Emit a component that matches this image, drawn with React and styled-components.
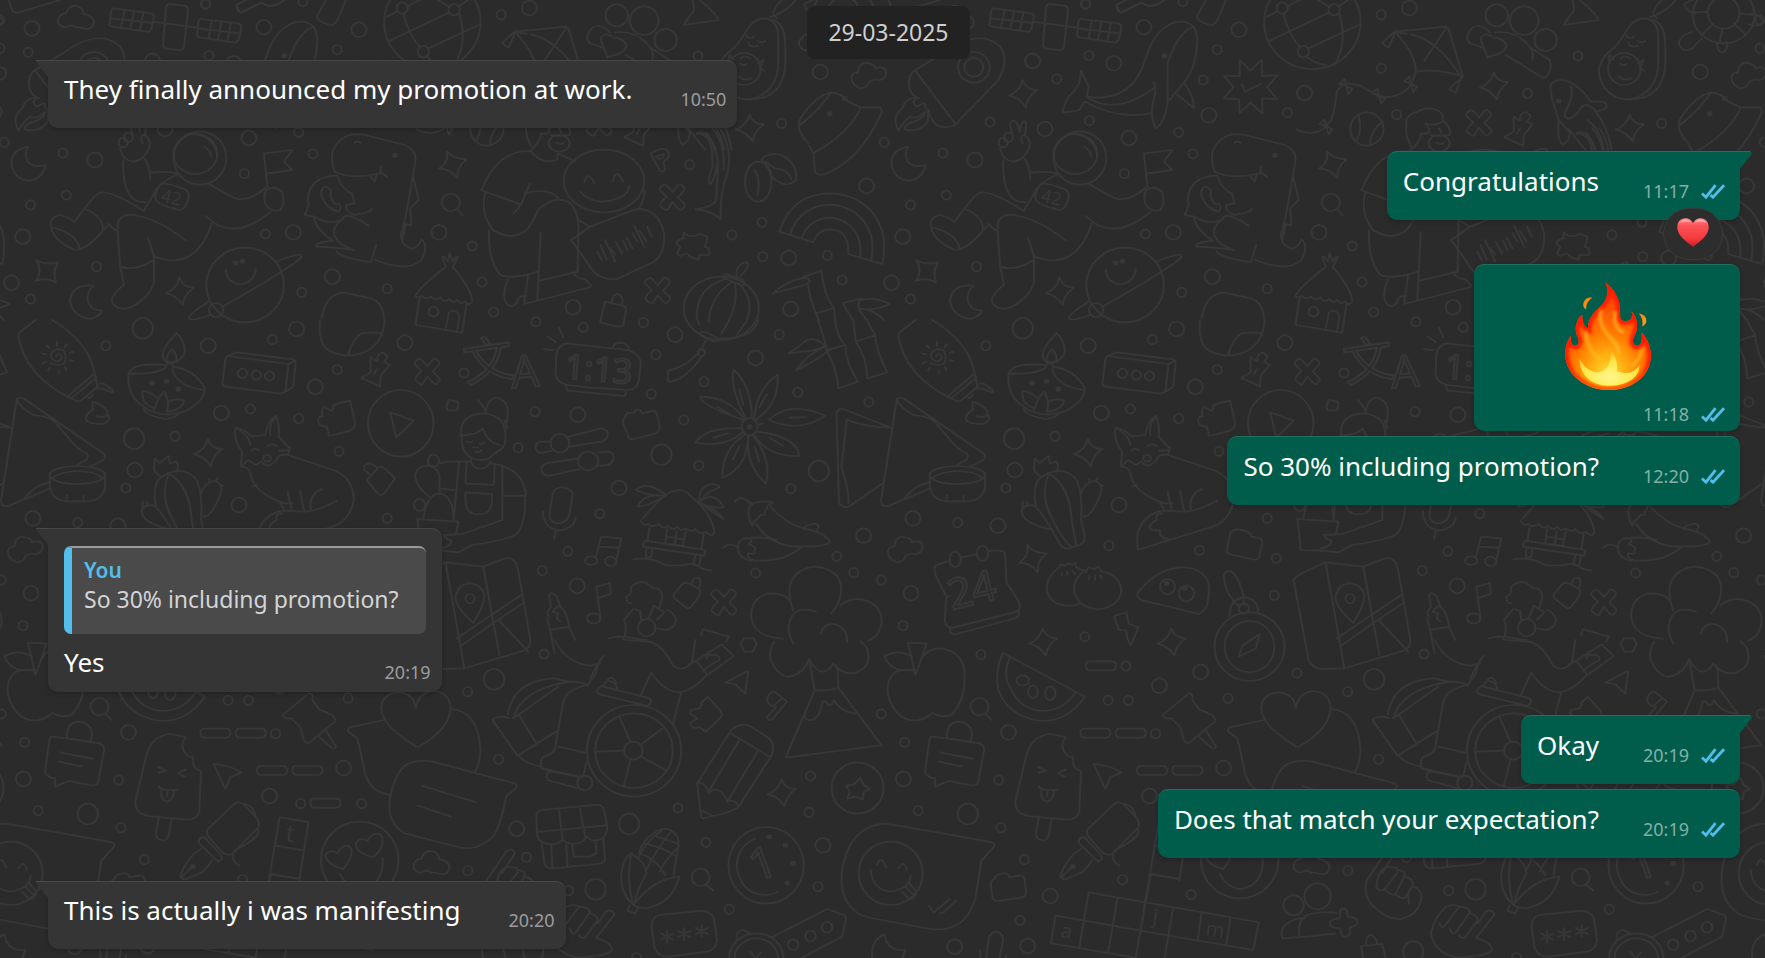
import React from 'react';
import styled, { createGlobalStyle, css } from 'styled-components';

const GlobalStyle = createGlobalStyle`
  * {
    box-sizing: border-box;
  }
  body {
    margin: 0;
    background: #2b2b2b;
    font-family: 'Noto Sans', 'Open Sans', sans-serif;
  }
`;

// ---------------------------------------------------------------- wallpaper

const LINE = '#373737';
const TILE_WIDTH = 880;
const TILE_HEIGHT = 960;

// the doodles are drawn on enlarged sheets, this brings them back to size
const SHEET_SCALE = 'scale(0.3763 0.3333)';

const MARKS = {
  sparkle: 'M0,-40 Q8,-10 38,-10 Q12,10 8,42 Q-8,12 -37,6 Q-8,-6 0,-40Z',
  sparkleTilted: 'M-15,-40 Q0,-18 36,-15 Q12,5 12,40 Q-5,12 -37,12 Q-10,-5 -15,-40Z',
  sparkleSquare: 'M-27,-33 Q0,-20 29,-27 Q15,0 24,33 Q0,15 -29,28 Q-10,0 -27,-33Z',
  cross:
    'M0,-14 L16,-36 Q22,-40 32,-26 Q34,-20 14,2 L32,22 Q36,30 22,40 Q18,42 0,16 L-14,40 Q-20,42 -32,28 Q-36,22 -16,0 L-34,-20 Q-36,-28 -22,-36 Q-16,-38 0,-14Z',
  pin: 'M-15,-35 L2,-23 L3,-35 Q8,-50 20,-48 Q32,-40 27,-30 L20,-20 L35,-13 L12,20 L10,52 L-40,27 L-15,10Z M2,0 L-7,17',
  cloud:
    'M-22,40 Q-45,30 -46,7 Q-40,-10 -28,-7 Q-28,-35 -5,-37 Q18,-33 18,-20 Q45,-30 47,-8 Q45,15 25,15 Q15,10 0,22 Q0,37 -22,40Z',
  puff: 'M-25,30 Q-50,28 -45,3 Q-40,-10 -25,-12 Q-15,-40 5,-34 Q22,-27 22,-10 Q45,-7 50,13 Q45,38 28,35 Q10,28 0,30 Q-10,18 -25,30Z',
  pill: 'M12,0 h56 q12,0 12,13 t-12,14 h-56 q-12,0 -12,-14 t12,-13z',
  bow: 'M0,0 l-18,-6 l14,-14 z l16,10 l-10,16 z',
  star: 'M0,-18 V18 M-16,-9 L16,9 M-16,9 L16,-9',
};

const SHEETS = [
  {
    x: 0,
    y: 0,
    marks: [['puff', 200, 52]],
    small: [[0, 60], [75, 157], [0, 145], [805, 5], [546, 12]],
    medium: [[85, 85]],
    ovals: [[1198, 607, 24, 26], [1605, 543, 107, 94], [1152, 935, 13, 15], [574, 930, 19, 21]],
    dots: [[1050, 466]],
    paths: [
      'M22,0 L35,35 Q40,40 50,37 L160,0 M640,38 Q625,25 632,12 Q650,5 660,-5 M640,38 L695,8 Q720,30 755,0',
      // t-rex on the phone
      'M890,515 Q870,460 900,425 Q925,395 970,405 L1075,435 Q1110,450 1103,490 L1095,540 Q1080,650 1065,710 M890,515 Q940,540 1010,520 L1013,500 M1010,515 L1028,530 M985,530 L995,545 L1000,525 M942,428 Q950,420 958,428',
      'M895,527 Q820,530 818,600 L820,615 L810,645 L835,650 Q880,680 912,655 M868,560 Q850,560 855,590 Q870,630 900,635 Q910,625 900,610 Q885,620 878,585 Q885,570 868,560 M897,527 L905,552 L925,575 L935,580 L942,610 L920,615 Q915,630 940,645 Q980,640 988,627',
      'M912,655 Q880,680 890,710 Q900,735 940,750 Q870,740 840,740 Q835,728 885,722 Q840,690 835,655 M895,755 Q900,770 985,787 L1000,735 M993,778 Q1080,820 1120,780 Q1140,740 1120,718 Q1110,745 1095,745 Q1065,740 1065,700 M912,650 Q930,640 980,677 M1098,530 L1113,600 L1090,625 L1093,675 L1078,672 L1070,718',
      'M1214,627 L1230,646',
      // sitting man
      'M1280,570 Q1320,450 1410,453 M1277,570 L1385,614 L1408,550 M1290,580 Q1275,640 1310,690 Q1360,725 1400,690 Q1420,660 1430,630 Q1470,585 1510,605 Q1540,630 1537,700 L1535,815 L1435,842 M1395,580 Q1460,560 1485,597 M1385,614 L1365,640 M1300,690 Q1295,780 1330,825 Q1360,840 1430,815 M1437,697 L1428,900 M1403,830 L1393,912 L1568,862 M1350,838 Q1330,890 1350,915 Q1370,925 1378,895 Q1385,885 1395,890 M1537,660 L1568,680 M1410,453 Q1440,495 1480,480 L1482,460 L1530,485',
      'M1525,820 Q1530,835 1555,838 L1572,858',
      'M855,955 Q865,880 915,878 L985,895 Q1020,910 1020,955',
      // hut
      'M1105,890 Q1105,870 1185,800 L1175,770 Q1180,765 1190,785 L1195,758 L1203,785 Q1215,765 1218,770 L1203,800 Q1255,870 1255,905 Q1245,920 1235,905 Q1225,915 1215,900 Q1205,912 1195,898 Q1180,910 1170,893 Q1155,905 1145,890 Q1130,902 1122,888 Q1110,895 1105,890 M1115,895 L1104,975 L1228,998 L1240,912 M1190,955 Q1190,930 1208,932 Q1222,940 1220,955 L1215,990 M1190,955 L1185,985',
    ],
  },
  {
    x: 590,
    y: 0,
    marks: [
      ['sparkle', 424, 383], ['sparkle', 1150, 280], ['sparkle', 1248, 873],
      ['sparkleSquare', 895, 815], ['cross', 219, 590], ['cross', 180, 870], ['cloud', 740, 225],
    ],
    small: [
      [1317, 12], [1326, 167], [1240, 237], [1063, 366], [782, 427], [938, 459], [947, 585],
      [852, 615], [509, 370], [457, 667], [377, 705], [459, 770], [631, 766], [670, 840],
      [852, 897], [1027, 800], [1476, 702], [1420, 521], [1327, 362], [265, 494],
    ],
    medium: [
      [1472, 82], [1176, 183], [1392, 190], [612, 216], [1209, 387], [1432, 414], [1023, 480],
      [735, 558], [831, 710], [1550, 697], [528, 774], [801, 848], [533, 927],
    ],
    ovals: [
      [447, 545, 35, 60], [1020, 202, 42, 46], [1020, 202, 25, 28], [1112, 412, 12, 14],
      [1098, 428, 12, 14], [1302, 474, 70, 80], [1290, 462, 58, 60], [1422, 855, 103, 112],
      [349, 925, 100, 95],
    ],
    dots: [[1526, 167], [637, 341], [677, 296], [1397, 789], [1415, 784]],
    paths: [
      // whale
      'M1320,290 Q1440,310 1475,180 Q1505,70 1570,64 Q1612,66 1614,120 Q1612,200 1580,245 L1540,300 M1602,80 Q1560,100 1535,190 L1535,310 Q1525,370 1505,385 Q1485,350 1500,290 Q1505,260 1498,245 M1580,250 Q1605,290 1605,325 Q1590,310 1560,283 M1320,290 L1325,260 L1305,212 L1300,250 L1285,275 Q1265,295 1260,320 L1255,337 Q1290,335 1300,330 L1315,305 Q1400,360 1490,340 M1325,295 Q1400,345 1498,265',
      'M285,400 Q330,400 325,500 Q310,550 320,552 Q330,545 340,480 M345,385 Q380,450 365,520 Q345,580 347,657 Q320,630 280,628 Q330,620 335,600 L340,500 Q340,440 310,400 M325,385 Q360,430 355,510',
      // hat
      'M640,277 Q670,280 680,300 Q710,320 720,322 L770,322 Q780,330 770,350 Q720,470 640,515 Q600,535 597,510 L594,460 Q580,430 560,400 Q548,370 565,345 Q600,290 640,277 M720,322 Q690,400 594,460 M640,280 Q600,340 558,375',
      'M437,508 Q455,540 445,587 M455,480 Q470,455 510,465 Q555,495 547,540 Q520,570 483,530 Q480,500 455,480 M468,485 Q490,510 510,508 Q530,520 535,537',
      // rainbow
      'M503,695 C530,600 590,580 640,580 C730,585 800,660 777,792 L686,762 C690,700 660,688 635,688 Q605,690 593,727 Z M532,703 C550,635 600,614 640,614 C715,620 765,690 747,780 M563,714 C575,670 610,653 640,653 C690,660 725,700 718,772',
      'M250,697 Q255,710 280,708 L290,702 L312,710 L306,740 Q320,745 317,765 L290,765 L288,780 L265,770 Q260,755 240,768 L232,760 L240,740 Q228,735 232,722 L248,715Z',
      'M162,460 Q190,440 205,450 Q218,470 195,485 L200,510 Q190,520 185,510 L162,465 M175,470 L195,462 Q200,470 185,478Z',
      // rocket
      'M875,295 Q845,285 848,240 Q850,220 865,210 L980,130 Q1050,95 1090,140 Q1115,180 1085,240 L972,373 Q950,390 920,375 Q900,350 900,330 M865,213 L972,373',
      'M820,392 Q800,350 830,325 Q835,295 870,293 Q850,310 870,320 Q895,300 890,320 Q905,340 895,370 Q870,400 835,388 Q840,370 860,365 Q890,355 890,335 Q870,360 850,350 Q830,370 820,392',
      // satellite
      'M1072,25 L1172,40 Q1180,42 1180,50 L1172,90 Q1170,97 1160,95 L1070,80 Q1060,78 1062,70 L1066,35 Q1068,25 1072,25 M1102,28 L1092,84 M1127,32 L1117,88 M1152,36 L1142,92 M1063,55 L1175,68 M1222,12 L1260,17 Q1270,20 1270,30 L1260,140 Q1258,150 1248,150 L1212,146 Q1203,142 1204,132 L1212,22 Q1214,12 1222,12Z M1180,66 L1295,83 M1304,57 L1405,70 Q1413,74 1412,82 L1405,120 Q1400,128 1392,127 L1300,112 Q1293,108 1295,100 L1298,65 Q1300,57 1304,57 M1334,60 L1325,116 M1359,64 L1350,120 M1384,68 L1375,124 M1296,85 L1410,100',
      'M1410,38 Q1395,25 1402,12 Q1420,5 1430,-5 M1410,38 L1465,8 Q1490,30 1525,0',
      // astronaut
      'M1090,445 Q1095,480 1125,485 Q1155,480 1168,440 Q1170,415 1155,405 Q1160,380 1158,365 Q1145,360 1142,395 Q1138,370 1128,362 Q1110,360 1122,400 M1155,405 Q1140,405 1150,430 M1098,480 Q1095,590 1140,605 L1157,607 M1155,475 Q1170,500 1170,540 M1270,402 Q1340,400 1348,470 M1313,440 Q1330,450 1332,472',
      'M1170,518 Q1210,512 1240,520 M1245,522 Q1190,550 1180,580 L1153,633 Q1050,560 1030,582 Q1015,595 968,667 Q955,650 930,645 Q905,650 905,675 Q910,720 965,748 Q1000,755 1045,690 L1060,672 Q1070,690 1083,690 M1200,552 Q1215,548 1262,568 Q1275,575 1272,595 Q1265,625 1250,630 Q1200,620 1185,600 Q1180,590 1190,565 Q1195,552 1200,552',
      'M998,627 Q1045,650 1045,690 M908,682 Q975,700 983,748 M1083,690 Q1080,640 1125,645 Q1190,655 1265,722 M1083,690 L1090,800 L1100,855 Q1060,890 1070,910 Q1090,940 1130,915 Q1180,880 1180,835 L1180,770 Q1170,730 1163,712 M1090,800 Q1130,815 1178,780 M1178,768 Q1290,820 1335,665 M1317,648 Q1390,730 1490,635 M1327,552 Q1380,590 1405,598 Q1440,600 1480,560 M1478,570 Q1500,555 1520,575 Q1530,610 1515,630 Q1490,640 1475,610 Q1470,590 1478,570 M1482,565 L1472,460 L1548,450 L1525,485 L1548,510 L1482,520',
      // planet
      'M1371,810 Q1375,850 1410,853 Q1450,845 1450,805 M1505,785 Q1570,755 1573,768 Q1565,790 1362,920 M1325,905 Q1270,945 1273,955 Q1280,965 1330,945',
      'M846,440 Q798,450 801,495 Q810,540 850,542 Q885,535 892,495 Q860,505 845,485 Q833,465 846,440 M1020,857 Q960,850 957,905 Q965,950 1010,957 Q1035,950 1042,932 Q1005,930 1003,895 Q1005,870 1020,857',
      // voice note
      'M0,680 L120,628 Q180,620 197,700 Q200,760 170,785 L70,838 Q20,840 0,800 L-50,720 Z M20,755 L32,782 M28,735 L45,780 M40,720 L67,785 M55,745 L67,765 M68,725 L85,760 M88,722 L100,750 M98,712 L113,745 M113,700 L125,725 M118,678 L145,742 M132,692 L150,725 M152,680 L164,710 M60,545 Q70,500 88,545 M-15,545 Q-5,510 12,550 M104,558 Q100,600 30,605 Q-10,600 -25,575 M145,570 Q145,600 130,627',
      // pumpkin
      'M360,838 Q285,860 283,950 L290,975 M375,848 Q320,890 315,965 M385,850 Q395,900 370,960 L350,1000 M395,850 Q440,900 415,965 L390,1005 M352,832 L360,822 L405,838 Q415,850 405,858 Q380,845 352,832 M390,828 Q385,795 415,787 Q430,795 400,828',
      'M40,905 L90,918 Q97,922 95,935 L88,978 Q80,980 75,980 L27,968 Z M58,905 Q60,882 75,882 Q90,890 85,912',
      'M485,880 Q540,830 580,835 Q590,850 570,855 L485,880 M565,832 L615,812 Q620,880 648,925 L600,940 Q580,880 580,855 M600,940 L610,965 M648,925 L652,960 M672,910 L722,895 Q710,905 715,930 L735,960 M672,910 L698,960 M722,900 Q760,890 797,912 Q750,935 715,925 M715,925 Q760,930 780,960',
    ],
  },
  {
    x: 1175,
    y: 0,
    marks: [
      ['sparkle', 847, 257], ['sparkleTilted', 419, 494], ['cross', 808, 367], ['pin', 915, 385],
      ['bow', 455, 257], ['bow', 542, 285], ['bow', 627, 250], ['bow', 402, 378],
    ],
    small: [
      [112, 149], [75, 240], [10, 397], [299, 338], [548, 44], [548, 205], [589, 344],
      [937, 280], [1071, 168], [48, 462], [18, 877], [245, 866], [471, 738], [497, 846], [528, 936],
    ],
    medium: [[170, 89], [344, 279], [90, 346], [623, 24], [383, 697], [99, 830], [739, 922]],
    ovals: [
      [365, 67, 128, 140], [285, 24, 15, 17], [423, 29, 15, 17], [341, 155, 15, 17],
      [855, 46, 30, 33], [928, 62, 38, 43], [985, 120, 30, 33], [1194, 207, 43, 48],
      [1458, 45, 82, 85], [1458, 38, 42, 48], [510, 387, 44, 50], [702, 430, 28, 25],
    ],
    dots: [[1019, 303]],
    paths: [
      'M85,-5 L60,45 Q55,55 65,62 L90,75 Q105,80 115,55 L137,-5',
      'M244,50 L272,34 M300,18 L340,-5 M437,18 L465,-5 M252,122 L408,38 M437,42 Q460,120 425,195 M355,145 L488,75 M288,40 Q300,100 332,142 M350,170 Q370,190 400,195 M380,0 L408,20',
      // kite
      'M583,95 L720,80 Q726,82 728,90 L765,230 Q700,205 640,215 Q640,160 583,95 Z M720,85 L662,183 M628,103 Q700,120 762,235 M583,95 L550,130 L568,143 L585,98 L615,101 M760,235 L728,267 L746,279 L758,240 M640,215 Q635,240 620,265 Q590,295 545,292 Q520,275 500,262 Q450,235 430,275 Q425,330 415,360 Q400,385 380,395 Q350,405 322,388',
      'M838,97 Q800,60 782,95 Q770,120 785,130 L820,145 M830,172 L812,118 Q820,92 846,112 Q880,115 880,142 Q875,160 830,172 M850,97 Q900,90 935,130 Q955,150 950,180 M880,165 L975,232 Q985,237 990,225 Q1005,200 995,180 Q970,160 940,140',
      'M1057,0 L1060,30 L1033,75 L1125,60 Q1120,40 1070,-5',
      // avocado
      'M1160,150 C1195,120 1200,60 1245,55 C1300,60 1280,130 1285,180 C1285,250 1255,290 1205,298 C1150,300 1120,240 1128,200 Q1135,170 1160,150 M1270,60 C1310,75 1302,130 1303,190 C1300,260 1270,300 1205,298 M1198,105 Q1205,118 1218,112 M1230,122 Q1238,132 1250,123 M1205,128 Q1210,145 1230,138 M1185,175 Q1195,165 1210,175 M1182,190 Q1190,200 1200,192 M1180,230 Q1195,245 1212,235 M1152,182 L1155,165 L1165,178 M1230,190 L1245,180 L1235,205 L1248,212 M1262,52 L1275,45 L1280,55 M1278,45 Q1310,30 1330,0 M1270,40 Q1280,10 1300,-5',
      // turtle
      'M1375,95 Q1335,110 1340,135 Q1350,160 1375,145 L1400,115 M1440,130 Q1445,165 1460,155 Q1472,140 1465,125 M1530,40 Q1560,45 1562,65 Q1550,85 1525,72 M1382,40 Q1350,30 1355,10 L1375,0 M1377,38 L1415,35 M1400,105 L1430,72 M1447,128 L1455,85 M1515,102 L1485,70 M1540,45 L1500,40',
      'M200,212 L230,180 L232,228 L272,225 L245,262 L272,298 L232,295 L232,340 L200,308 L172,340 L170,298 L130,295 L155,262 L130,228 L172,228 L172,180 Z M178,252 L185,275 L228,252',
      'M487,345 Q500,390 480,425 M552,365 Q520,390 518,435',
      'M628,440 Q610,400 615,375 Q610,345 645,335 Q665,320 690,328 Q715,335 712,360 Q735,385 730,405 Q700,410 680,405 M712,365 Q690,380 665,370 Q690,405 655,400 Q655,420 626,452 M695,428 Q710,435 715,428 M702,385 L708,398',
      // orca
      'M1020,360 Q995,280 998,255 Q1010,235 1040,242 Q1080,260 1105,305 Q1150,300 1147,320 Q1140,330 1118,335 Q1150,380 1160,450 M1052,260 Q1060,290 1040,330 Q1030,350 1045,357 Q1065,350 1075,330 Q1085,305 1105,320 Q1115,325 1118,335 M1020,360 Q1015,420 1030,433 Q1045,430 1050,400 L1020,360 M1095,360 Q1130,385 1140,450 M1045,385 L1090,450 M1067,400 Q1100,385 1115,450',
    ],
  },
  {
    x: 0,
    y: 320,
    marks: [['pin', 1000, 147], ['cross', 1136, 153]],
    small: [
      [896, 149], [794, 296], [901, 394], [1233, 159], [1422, 275], [1377, 383], [1424, 5],
      [1029, 595], [1509, 694], [1550, 22],
    ],
    medium: [[1076, 68], [838, 200], [788, 27], [1536, 284]],
    ovals: [
      [710, 415, 10, 10], [1065, 310, 87, 100], [1152, 422, 15, 18], [1115, 555, 15, 18],
      [1488, 370, 25, 28], [1563, 423, 27, 28],
    ],
    paths: [
      'M850,0 Q845,80 880,95 Q930,120 980,90 Q1020,60 1022,0 M925,105 Q935,60 960,40 Q1000,35 1013,40',
      // fox
      'M625,325 Q640,320 670,350 Q690,345 705,345 Q712,300 733,287 Q745,320 740,350 L770,385 L765,405 Q740,400 735,420 Q710,450 695,425 L680,435 L660,420 L640,440 L643,395 Q620,360 625,325 M765,405 L880,448 Q940,470 940,540 Q930,610 870,625 L685,690 Q680,640 690,625 M640,440 Q665,440 667,470 Q680,520 750,548 M683,495 L672,500 M630,325 Q665,350 665,375 M718,345 Q715,310 730,295 M668,392 Q675,382 688,390 M712,378 Q722,368 735,378 M740,392 L768,390',
      'M765,517 L775,570 M797,512 L808,570 M857,507 Q820,520 826,570 M895,543 Q840,575 808,575 Q760,570 740,575 Q700,590 690,625 M745,550 L778,550 M745,550 L755,570 M750,580 Q730,580 735,600 Q710,615 720,630 L745,632 Q740,655 770,658',
      'M855,275 L860,260 Q875,270 880,272 Q890,265 885,258 Q895,250 905,248 L930,242 L943,305 Q945,325 930,332 L875,348 L868,320 Q845,320 845,300 Q850,285 857,290 Z',
      'M1037,277 L1100,302 L1053,352Z M1192,240 L1215,245 Q1220,250 1215,270 L1195,272 Q1183,268 1188,255Z',
      'M975,480 L1005,443 Q1012,438 1020,443 L1050,475 L1020,522 Q1010,528 1003,520 Z M985,465 L968,450 Q965,430 985,430 L1003,442',
      // florist
      'M1225,345 Q1220,285 1285,280 Q1345,285 1343,350 Q1345,385 1320,395 L1300,415 Q1280,425 1255,415 Q1225,400 1227,350 M1222,347 Q1270,345 1283,325 Q1295,370 1330,375 M1290,280 Q1295,235 1320,233 Q1350,240 1350,280 L1345,310 M1270,240 L1290,270 M1340,300 L1348,325 M1240,365 Q1248,370 1255,365 M1275,370 Q1280,375 1287,368 M1257,382 L1270,382 M1262,395 Q1275,400 1280,390',
      'M1250,420 Q1255,445 1275,447 Q1300,445 1302,425 M1170,430 Q1185,422 1250,425 M1302,430 Q1390,440 1398,527 L1335,527 M1335,435 L1335,600 L1228,642 L1195,645 M1395,527 Q1400,600 1375,640 Q1350,660 1255,675 L1220,697 L1175,692 M1220,428 L1205,600 M1240,425 L1237,490 L1312,495 L1315,432 M1237,517 L1307,522 Q1310,570 1290,580 Q1260,590 1243,570 Q1235,550 1237,517 M1170,505 L1205,510',
      'M1108,597 L1218,605 L1212,640 M1110,600 L1118,690 L1175,692 M1125,595 Q1135,520 1170,520 Q1205,530 1205,600 M1140,530 Q1105,500 1103,465 Q1110,435 1140,437 Q1170,445 1168,480 L1168,515 M1180,645 Q1190,665 1200,660 Q1200,680 1172,685 M1180,645 L1212,642',
      // microphone
      'M1468,525 Q1475,500 1495,502 Q1520,505 1522,525 L1512,590 Q1500,612 1480,610 Q1460,605 1460,585 Z M1442,573 Q1445,625 1485,632 Q1525,625 1530,592 M1477,632 L1473,655',
      'M1485,22 L1497,52 M1455,50 L1477,66 M1445,87 L1470,90',
      'M1465,365 L1435,365 Q1420,370 1424,388 Q1430,400 1440,398 L1465,393 M1512,350 L1598,325 Q1618,330 1615,345 Q1613,360 1598,365 L1513,380 M1538,415 L1450,430 Q1435,440 1440,455 Q1445,468 1460,467 L1538,448 M1590,398 L1618,395 Q1633,400 1630,418 Q1623,435 1613,435 L1588,438',
    ],
  },
  {
    x: 590,
    y: 320,
    marks: [
      ['sparkle', 1323, 397], ['sparkleTilted', 1177, 716], ['cross', 356, 845],
      ['cloud', 837, 687],
    ],
    small: [
      [142, 8], [303, 185], [503, 44], [552, 217], [175, 104], [163, 222], [249, 300],
      [289, 437], [741, 246], [534, 506], [26, 581], [656, 709], [701, 758], [774, 780],
      [440, 759], [832, 917], [977, 608], [1105, 504], [1236, 349], [1052, 77], [1436, 267],
      [1494, 59], [1379, 677], [1315, 950],
    ],
    medium: [
      [226, 44], [440, 114], [77, 504], [727, 647], [853, 820], [858, 595], [1084, 617],
      [1129, 450], [1359, 279], [1324, 77], [1406, 555],
    ],
    large: [[190, 404], [608, 453], [1127, 356], [1150, 25]],
    ovals: [
      [1415, 160, 12, 14], [1452, 165, 12, 14], [1487, 168, 12, 14], [976, 465, 73, 27],
      [424, 320, 21, 26], [3, 722, 16, 13], [55, 724, 15, 14], [10, 895, 18, 15],
      [970, 718, 15, 23], [1043, 700, 15, 23], [1535, 800, 20, 23], [1585, 820, 20, 24],
      [151, 923, 23, 26], [296, 98, 9, 10],
    ],
    dots: [[1175, 189], [1213, 184], [1244, 207], [1532, 790], [1580, 805], [424, 320]],
    paths: [
      // sunscreen
      'M865,0 L825,35 Q815,50 825,75 Q850,170 950,230 L1022,160 Q1010,70 910,0 M950,230 L975,243 Q985,245 990,238 L1030,200 L1022,160 M960,235 L1027,172 M1030,192 L1045,190 L1070,210 L1070,218 L1040,205 L1028,205 M1002,228 L1008,235 L1017,225',
      'M920,110 Q925,95 935,108 Q935,125 920,124 Q900,115 908,98 Q925,80 940,92 Q950,110 940,130 Q925,140 905,130 M922,65 L922,77 M948,72 L942,84 M965,95 L954,100 M965,123 L955,120 M948,150 L943,142 M927,160 L927,150 M898,152 L904,142 M883,130 L893,125 M883,100 L893,103 M895,76 L901,84',
      'M1017,245 L1017,270 Q995,285 1000,300 Q1010,315 1050,310 Q1065,300 1060,285 Q1045,295 1028,288 M1017,245 Q1060,260 1055,285',
      // oil lamp
      'M1240,40 Q1195,90 1205,115 Q1215,135 1228,130 Q1260,120 1262,90 Q1260,60 1240,40 M1228,88 Q1210,105 1215,122 Q1228,135 1240,120 Q1242,105 1228,88 M1215,135 Q1110,125 1112,170 Q1110,230 1155,262 Q1200,300 1270,270 Q1315,240 1315,205 Q1290,150 1230,140 L1228,130 M1112,160 Q1190,165 1213,140 M1228,145 Q1240,200 1313,210 M1153,262 Q1150,285 1210,297 Q1240,295 1245,280 M1180,270 Q1190,230 1207,215 Q1225,250 1213,275 M1180,265 Q1145,250 1150,213 Q1170,215 1187,232 M1217,245 Q1235,235 1260,240 Q1255,270 1215,275',
      'M1375,108 L1537,132 L1530,210 Q1525,222 1512,220 L1370,200 Q1360,195 1362,188 L1370,115 Z M1375,108 L1400,97 L1550,118 Q1557,120 1556,130 L1550,200 L1530,215 M1537,132 L1555,122',
      // samosa and dip
      'M662,550 L655,285 Q655,265 672,267 L800,323 Q720,320 682,298 Q680,330 668,440 Q690,520 687,550 M662,550 Q675,568 690,558 L778,490 M814,240 Q820,225 840,240 L1045,400 Q1055,410 1045,420 L1010,440 M975,435 L1000,420 Q1010,400 995,398 Q960,370 950,350 L920,310 Q905,290 860,285 Q830,270 815,240 L773,545 Q775,562 795,557 L905,505 M835,535 Q870,490 903,488',
      'M903,460 L903,500 Q910,543 950,544 L1005,544 Q1045,540 1050,500 L1050,460 M910,475 Q930,455 975,453 Q1030,455 1040,475 M948,525 L948,542 M993,525 L993,542',
      // cactus
      'M1180,450 L1182,415 L1195,430 L1218,408 L1222,430 L1240,425 Q1247,440 1240,455 M1180,450 Q1190,470 1205,470 M1185,560 Q1175,500 1195,475 Q1250,430 1290,475 Q1310,510 1305,600 L1315,650 Q1315,670 1300,675 L1275,685 Q1255,690 1245,665 Q1215,600 1185,560 M1218,465 Q1195,530 1230,600 Q1250,650 1280,683 M1222,462 Q1275,500 1280,600 L1292,675 M1305,520 Q1320,480 1345,483 Q1370,500 1350,540 Q1330,590 1312,590 M1328,485 L1325,477 M1345,482 L1348,475 M1357,495 L1364,498 M1185,558 Q1160,550 1147,570 Q1145,610 1225,628 M1150,560 L1150,545 M1160,555 L1163,545',
      // clock
      'M0,78 L-60,70 Q-88,75 -90,110 L-91,165 Q-88,190 -58,195 L0,203 L100,210 Q125,210 130,180 L135,125 Q130,100 100,90 L0,78 M62,80 Q65,68 85,68 Q105,75 103,90 M-65,195 L-60,212 L90,228 Q97,225 95,212',
      'M28,655 Q28,650 35,650 L83,655 L70,720 M28,655 L15,715 M24,680 L77,683 M17,800 L53,790 L55,822 L20,835 M17,800 L28,895',
      'M88,300 L98,280 L118,278 L120,270 L135,272 L138,280 L170,272 Q180,275 185,325 Q183,335 175,340 L115,358 Q105,360 102,350 L88,310Z',
      'M290,40 Q300,25 345,60 Q330,75 290,40 M345,55 Q430,60 448,0 M308,62 L295,88 Q260,140 207,152 L207,185 Q250,185 298,108',
      // bamboo
      'M605,0 Q625,60 630,95 Q655,140 660,205 L712,185 Q680,130 678,75 L628,92 M650,-10 Q655,50 678,75 M700,0 L706,65 Q735,110 737,175 L790,157 Q760,90 758,45 L706,65 M735,0 L758,45 M622,75 Q590,40 560,75 L527,100 L590,92 Q610,85 622,80 Q580,100 548,150 Q590,130 630,95',
      // star anise
      'M415,298 Q370,200 382,148 Q430,200 430,292 M437,298 Q440,210 498,165 Q505,250 440,300 M408,300 Q300,260 292,230 Q370,230 412,300 M404,325 Q310,320 280,368 Q360,385 408,335 M475,300 Q530,240 625,287 Q560,340 475,300 M445,315 L460,310 M445,335 Q550,350 556,408 Q470,410 435,343 M410,345 Q350,390 352,474 Q420,440 420,347 M422,347 Q410,430 467,491 Q485,420 432,345',
      'M397,208 L407,255 M470,222 L450,262 M337,260 L374,285 M328,353 L368,340 M532,293 L574,291 M477,353 L513,378 M397,378 L380,418 M438,380 L450,427',
      // beach hut
      'M135,605 Q140,590 195,530 Q240,490 270,530 Q330,590 330,640 Q322,650 315,642 Q305,632 300,640 Q285,640 280,627 Q270,640 255,625 Q240,635 232,622 Q220,635 208,617 Q195,630 182,612 Q165,625 155,612 Q145,620 135,605 M158,625 L153,660 M302,640 L297,685 M145,662 L307,690 L303,707 L140,680Z M165,685 L163,712 L148,712 L150,685 M295,708 L290,738 L275,735 L280,705 M205,628 L200,670 L247,678 L255,633 M230,635 L226,672 M203,650 L250,658 M115,718 Q160,710 200,735 Q240,740 275,730 Q300,750 322,752',
      'M203,525 Q150,480 122,510 Q160,530 200,527 Q140,520 127,560 Q150,560 195,530 M290,545 Q290,495 325,492 Q350,495 340,505 Q310,515 292,545 Q330,510 355,562 Q320,565 292,548 Q340,570 355,597 Q330,580 295,550',
      // chillies
      'M385,545 Q400,520 432,555 M430,617 Q410,560 435,550 Q460,540 487,547 Q465,560 470,568 Q460,575 465,585 Q450,580 445,598 Q435,600 430,617 M480,560 Q520,610 565,625 Q620,635 638,665 Q630,680 560,680 Q480,680 442,612 M565,625 Q600,600 608,620 L603,632 M355,683 Q370,665 395,682 M430,655 Q390,650 393,690 Q400,720 435,722 M425,655 Q435,665 420,672 Q445,680 437,692 Q440,705 420,700 Q415,715 435,720 M430,653 Q460,650 495,660 M437,722 Q520,725 560,682',
      'M540,872 C500,750 590,740 598,740 C690,750 675,840 642,880 M530,840 Q515,820 480,820 Q430,830 428,885 Q430,950 512,956 M665,855 Q690,835 720,838 Q775,850 775,905 Q770,950 740,962 M600,875 Q530,850 527,930 Q530,950 540,970 M614,940 Q620,910 650,912 Q685,925 683,965',
      // calendar
      'M985,713 L1028,703 M1058,693 Q1100,688 1103,700 L1107,787 M957,722 L920,735 Q912,740 918,765 L947,830 L943,900 Q945,925 965,923 L1135,875 Q1145,865 1140,845 L1107,787 M957,925 L958,938 Q965,945 975,942 L1130,895 Q1143,888 1140,870 M947,830 L957,828',
      // dumplings
      'M1250,740 Q1210,770 1215,815 Q1225,855 1270,857 Q1290,858 1300,850 M1245,745 L1250,733 L1262,738 L1270,730 L1280,735 L1290,728 L1292,742 L1320,757 M1320,750 Q1280,775 1288,820 Q1300,865 1350,868 Q1405,860 1412,815 Q1410,765 1362,755 M1320,750 L1325,742 L1340,748 L1350,740 L1360,755 M1255,760 L1252,768 M1268,755 L1268,765 M1282,752 L1288,762 M1328,768 L1325,778 M1342,767 L1342,780 M1355,765 L1360,775',
      'M1455,820 Q1452,835 1470,842 L1568,868 L1615,882 Q1630,880 1640,855 Q1650,800 1640,780 Q1620,740 1568,742 Q1500,750 1455,820',
      'M1393,888 L1425,877 L1432,912 L1457,922 L1437,978 L1428,955 L1425,930 L1405,930Z',
      'M110,850 Q95,850 97,830 Q110,825 110,800 Q130,780 150,790 Q165,800 165,805 Q190,800 192,830 Q190,850 185,862 M155,897 L170,857 L198,877 L178,900 M205,870 Q228,880 228,905 Q220,930 198,930 L175,925 M90,960 Q100,920 90,900 L105,880 L115,867 L133,872 L137,905',
      'M225,820 L248,788 L265,790 L290,808 Q295,815 290,828 L268,862 Q262,868 255,862 L225,835 Q218,830 225,820 M270,790 Q275,770 290,775 Q298,790 288,805',
      'M300,928 L368,950 L362,965 M300,928 L295,945 M50,955 Q80,945 115,955 L150,960',
    ],
  },
  {
    x: 1175,
    y: 320,
    small: [[65, 691], [269, 715], [657, 752], [264, 826]],
    medium: [[750, 798]],
    ovals: [[183, 866, 14, 15], [465, 836, 12, 14], [198, 980, 93, 103], [198, 980, 66, 77]],
    paths: [
      'M147,640 Q155,628 165,628 Q190,632 200,640 L203,650 L225,655 Q233,658 232,670 L223,712 Q218,722 205,718 L145,703 Q135,698 138,690 Z',
      // compass
      'M130,765 Q140,740 160,765 Q185,810 183,855 M130,765 Q130,820 172,860 M145,888 Q145,835 185,832 Q225,840 220,880 M170,1010 L178,978 L225,942 L215,985Z',
      // map
      'M315,780 Q320,765 400,727 L500,740 L560,715 Q585,710 592,745 L625,955 Q630,985 600,995 L450,1045 L390,1047 Q365,1045 355,1020 L315,780 M400,727 L450,1045 M500,740 L543,1005 M473,908 Q425,860 427,830 Q435,790 465,790 Q500,795 503,830 Q500,865 473,908 M430,955 L605,822 M445,975 L520,915 L605,850 M545,905 L620,995',
      'M675,890 Q665,880 680,860 L675,825 Q685,812 695,830 L705,860 Q725,880 728,920 L678,930 L670,895 M705,860 Q695,855 685,875 L700,880 Q690,895 705,905 M678,930 L690,1000 M728,920 L745,960',
    ],
  },
  {
    x: 0,
    y: 640,
    marks: [['puff', 1145, 668], ['pill', 683, 378], ['pill', 777, 378], ['pill', 825, 476]],
    small: [
      [925, 175], [1243, 155], [1446, 42], [1325, 358], [1399, 652], [1243, 692], [1511, 752],
      [799, 491], [961, 491],
    ],
    medium: [[913, 384], [1373, 566]],
    large: [[1313, 118]],
    ovals: [[956, 660, 103, 115]],
    paths: [
      'M820,160 Q835,160 830,180 L850,210 Q895,225 890,245 L820,310 Q805,310 800,265 L775,235 Q755,240 752,225 L815,165 M865,270 L893,320 Q885,330 880,322 L848,290',
      // hearts and chat
      'M1105,205 Q1100,160 1060,157 Q1015,160 1013,205 Q1015,260 1110,322 Q1195,270 1197,205 Q1195,155 1150,153 Q1110,160 1105,205 M1020,240 L930,262 Q920,268 928,278 L950,295 L970,400 Q985,460 1040,465 M1197,207 Q1270,210 1277,330 Q1275,370 1262,397',
      'M1075,580 Q1030,550 1035,485 Q1050,380 1095,367 Q1120,358 1150,365 L1365,430 Q1380,435 1370,445 L1345,470 Q1330,560 1310,590 Q1270,635 1220,622 Z M1123,438 L1263,486 M1110,497 L1198,530',
      'M912,688 Q865,670 865,645 Q875,625 897,640 Q910,610 930,620 Q945,640 912,688 M993,652 Q945,640 945,610 Q955,590 977,602 Q990,575 1010,583 Q1030,610 993,652 M902,700 Q925,747 960,747 Q1020,735 1017,655',
      'M743,532 L820,546 L795,722 M743,532 L700,815 M733,617 L805,631 M720,702 L793,716',
      // shop
      'M1440,510 L1590,494 Q1603,497 1606,515 L1614,560 Q1612,595 1590,600 Q1570,605 1560,590 Q1545,615 1515,610 Q1500,608 1495,598 Q1485,615 1455,612 Q1425,605 1427,575 L1425,530 Q1425,512 1440,510 M1427,576 L1613,556 M1485,507 L1495,598 M1540,500 L1555,590 M1440,612 L1447,670 Q1450,687 1470,685 L1590,672 Q1608,670 1608,655 L1603,595 M1465,615 L1468,683 M1505,615 L1508,680 M1520,612 L1525,650 L1568,650 L1585,640 L1583,602',
    ],
  },
  {
    x: 590,
    y: 640,
    marks: [
      ['sparkle', 1203, 5], ['sparkle', 1545, 5], ['sparkle', 509, 457], ['pill', 1318, 64],
      ['pill', 1303, 266], ['pill', 1397, 266], ['star', 205, 890], ['star', 250, 882],
      ['star', 297, 873],
    ],
    small: [
      [1039, 44], [774, 222], [836, 307], [586, 408], [582, 517], [234, 504], [308, 607],
      [370, 808], [606, 740], [872, 512], [1086, 420], [1092, 563], [1154, 659], [1143, 841],
      [1415, 719], [124, 953], [1424, 78], [1377, 181], [1431, 181], [1503, 281],
    ],
    medium: [
      [833, 417], [619, 616], [1112, 277], [1513, 137], [1223, 768], [1163, 918], [969, 920],
      [1487, 468],
    ],
    large: [[104, 552], [1004, 522], [15, 748]],
    ovals: [
      [117, 332, 125, 137], [117, 332, 103, 112], [115, 332, 25, 27], [1150, 121, 17, 15],
      [1177, 155, 13, 19], [1223, 160, 14, 20], [1035, 200, 24, 26], [294, 712, 24, 26],
      [711, 444, 69, 77], [468, 676, 100, 115], [799, 700, 85, 95], [442, 955, 72, 75],
      [442, 955, 58, 60], [630, 862, 14, 16], [586, 888, 14, 16], [540, 914, 14, 16],
    ],
    dots: [[1283, 680], [476, 590], [520, 616], [540, 670], [524, 729]],
    paths: [
      // volcano
      'M490,5 Q475,25 480,60 Q500,110 530,110 Q570,100 582,57 Q600,95 620,95 Q640,90 645,70 Q665,100 695,100 Q740,90 740,50 Q740,20 720,5 M582,57 L597,150 Q630,155 660,143 L658,88 M597,150 L520,353 L775,316 L660,143 M573,215 Q565,235 580,240 Q610,245 618,185 Q628,180 632,195 L642,195 L648,180 Q670,220 710,220',
      // wheelchair
      'M78,230 L107,305 M193,265 L138,312 M13,335 L90,332 M200,390 L137,350 M90,437 L107,360 M28,140 Q15,148 22,162 L150,197 Q162,197 162,180 Q160,175 150,172 L35,140 Q30,138 28,140 M35,140 Q38,125 50,123 Q75,130 72,150 M45,123 Q50,110 62,115 L70,130 M135,165 L163,98 Q200,160 240,157 Q275,150 310,105 M242,158 L220,255 M280,0 L270,70 Q240,100 220,75 Q190,10 155,5 L95,0 M265,72 L290,57 L350,13 L382,48 L312,105 L285,65 M300,95 Q320,70 345,60 Q345,40 315,45 L310,55 M0,115 L20,75 L35,50',
      'M313,170 L345,210 Q355,225 345,235 L308,275 Q300,268 290,262 Q270,268 265,250 L285,235 L265,220 L268,210 L290,205 Q300,195 295,190Z M360,128 L415,95 Q422,95 420,100 L412,160 L385,132 Z M470,180 Q475,155 490,155 L523,185 L485,238 Q475,245 470,232 L495,200 Q475,200 470,180 M490,195 L510,175 M400,10 L410,-5 L435,-5 L443,12 L432,35 L410,35Z',
      // apple
      'M863,93 Q850,85 820,92 Q785,110 792,165 Q810,240 865,242 Q890,240 910,218 Q930,235 960,225 Q1000,180 995,90 Q985,30 930,25 Q900,25 885,50 M845,8 L895,10 L865,105Z M857,90 Q800,100 782,48 Q820,25 855,50',
      'M1097,38 L1315,170 Q1270,245 1200,243 Q1110,230 1085,150 Q1075,90 1097,38 M1115,55 Q1095,110 1120,150 Q1145,210 1205,213 Q1260,210 1290,157',
      'M1052,222 L1067,240 M308,733 L327,752',
      // pencil
      'M285,430 L372,275 Q395,245 425,258 L470,290 Q495,310 483,345 L395,500 Q385,515 300,535 Q295,535 293,510 Z M370,277 L480,352 M398,298 L315,455 M445,335 L365,485 M288,428 Q310,430 315,458 Q345,430 365,485 Q385,475 395,500 M293,510 L328,528',
      'M718,413 L728,435 L743,447 L727,457 L725,478 L705,470 L685,475 L690,455 L680,437 L703,433Z',
      'M908,290 Q915,288 1035,310 Q1048,315 1047,330 L1032,425 Q1028,437 1015,436 L953,423 L917,440 L917,415 Q895,412 890,395 L902,300 Q903,292 908,290 M948,290 Q950,245 980,245 Q1015,250 1015,285 L1012,303 M930,337 L1015,356 M927,365 L987,379',
      // ice cream
      'M1160,345 Q1175,285 1225,282 L1265,292 Q1250,310 1258,330 Q1265,350 1283,352 Q1280,385 1305,393 L1300,515 Q1295,540 1265,539 L1165,528 Q1130,520 1130,485 Z M1193,530 L1185,580 Q1185,600 1205,602 Q1218,598 1220,580 L1227,537 M1190,380 L1213,393 L1193,398 M1265,388 L1243,400 L1263,410 M1193,440 Q1200,450 1210,450 L1243,450 M1200,450 Q1195,480 1215,485 Q1232,480 1233,452 M1216,455 L1215,470',
      'M1338,372 Q1380,375 1412,397 L1383,412 L1370,447 Z',
      // fountain pen
      'M1325,590 Q1315,575 1325,565 L1390,495 Q1405,480 1420,495 L1450,530 Q1465,550 1455,565 L1390,640 Q1375,650 1360,635Z M1300,610 Q1295,595 1312,590 L1358,645 Q1365,660 1350,665 L1300,610 M1305,625 Q1270,650 1250,705 Q1250,720 1265,717 L1310,695 Q1330,670 1335,660 M1255,710 L1280,682 M1420,492 Q1445,495 1450,530 M1455,565 Q1470,590 1395,630 Q1380,660 1407,677',
      // corn
      'M130,640 Q140,600 170,580 Q190,560 215,570 Q240,590 235,620 L222,705 M115,795 Q80,760 83,700 Q90,650 110,640 Q150,670 150,700 Q130,740 115,795 Q170,715 237,710 Q220,790 150,805 Q130,805 115,795 M110,640 Q95,720 115,795 M105,797 L100,812 L120,820 L127,805 M130,640 Q175,655 200,705 M145,610 Q190,620 230,650 M165,585 Q205,600 235,612 M150,690 Q170,640 215,575 M185,695 Q205,650 232,625 M130,650 Q145,610 190,572',
      'M438,597 Q390,620 390,680 Q400,765 470,765 Q490,762 500,755',
      // winking chat
      'M720,825 Q660,790 670,690 Q690,560 780,551 Q790,550 1068,607 Q1080,612 1070,625 L1040,662 L1025,770 Q1000,880 905,867 L750,835 Z M763,675 Q773,640 787,683 M820,685 Q835,655 842,692 M746,690 Q750,750 800,755 Q850,745 852,708 M828,755 L850,778 Q865,775 867,757 L848,728 M838,740 L860,765 M900,797 L913,818 L955,778 M930,818 L937,820 L973,782',
      'M185,825 L295,812 Q325,815 330,840 L338,900 Q335,930 310,935 L210,950 Q180,950 172,925 L163,860 Q165,830 185,825',
      'M487,890 L630,807 L675,825 Q682,830 680,840 L670,890 L560,955 M390,900 Q385,875 405,870 L425,880 M425,935 L440,955 L455,937',
      'M782,883 Q745,900 750,955 M782,883 Q790,935 838,930 L830,955 M1052,955 L1060,895 Q1065,875 1080,875 Q1098,880 1098,900 L1088,955 M1037,930 V955 M1105,945 V958',
      'M1065,735 Q1068,715 1075,718 L1080,705 L1100,700 Q1112,700 1115,712 L1145,706 Q1153,708 1155,720 L1159,755 Q1158,768 1150,772 L1085,783 Q1072,782 1070,775Z',
      // crossword
      'M1325,757 L1777,847 L1763,930 L1450,870 M1237,827 L1480,875 M1225,910 L1450,953 M1237,827 L1225,910 M1325,757 L1300,925 M1402,772 L1377,937 M1490,703 L1450,953 M1550,800 L1527,953 M1490,703 L1560,716 M1625,818 L1615,903 M1702,832 L1690,918',
    ],
  },
  {
    x: 1175,
    y: 640,
    small: [[324, 99], [43, 764]],
    medium: [[68, 96]],
    large: [[633, 935]],
    ovals: [[770, 429, 20, 22], [315, 796, 27, 30], [379, 769, 35, 39]],
    paths: [
      'M690,0 Q720,70 785,77 L810,70 M820,48 Q805,60 800,100 L778,135',
      'M570,235 Q545,225 530,235 L525,240 L590,345 Q620,375 655,380 M565,225 Q580,120 690,115 L735,127 M580,235 Q600,150 720,127 Q750,120 780,135 Q720,145 712,190 L690,330 Q680,345 660,350 Q650,365 655,385 L755,410 M700,270 L595,345 M595,225 L640,308 M580,235 L700,140 M700,320 L770,338 M775,365 L765,410 M675,395 Q665,405 672,420 L750,445 M680,395 L755,410',
      // hands
      'M561,635 L509,722 Q500,760 520,790 Q560,840 600,837 Q650,825 655,770 Q650,740 630,740 Q615,750 622,790 M561,635 Q580,620 584,640 L550,700 M535,740 Q540,690 565,680 Q600,680 590,700 L555,750 Q540,755 535,740 M595,690 Q620,695 605,720 L585,765 Q570,765 560,750 M610,710 Q635,715 632,740 L610,775 Q595,775 590,765',
      'M680,880 Q690,830 720,800 Q740,790 755,800 Q780,800 785,820 Q810,830 805,850 L825,815 Q845,805 848,825 L800,895 Q840,905 842,930 Q830,950 750,952 Q690,940 680,880 M755,800 L715,860 Q705,865 703,850 M785,815 L745,880 Q735,885 730,865 M805,840 L770,893 Q755,895 755,885',
      // new group
      'M285,895 Q275,850 330,835 L345,835 M330,890 Q325,830 360,822 Q400,812 430,820 M285,895 Q360,890 425,880 M438,835 V815 Q440,805 450,806 Q460,810 459,830 L475,833 Q487,840 485,850 Q482,860 465,862 L465,880 Q460,892 450,890 Q440,885 438,865 L420,862 Q410,855 412,845 Q418,835 438,835',
      'M500,918 L550,912 L560,955 M495,920 L500,955 M508,915 Q508,885 520,885 Q535,890 537,912',
    ],
  },
];

const LETTERS = [
  { label: '42', x: 160, y: 201, size: 18, turn: 14 },
  { label: '文', x: 466, y: 382, size: 50, turn: -8, outline: true },
  { label: 'A', x: 512, y: 388, size: 44, turn: -4, outline: true },
  { label: '1:13', x: 564, y: 378, size: 34, turn: 5, outline: true },
  { label: '24', x: 72, y: 610, size: 42, turn: -14, outline: true },
  { label: '1', x: 756, y: 882, size: 44, turn: -20, outline: true },
  { label: 't', x: 285, y: 841, size: 24, turn: 8 },
  { label: 'a', x: 180, y: 937, size: 20, turn: 8 },
  { label: 'j', x: 272, y: 923, size: 20, turn: 8 },
  { label: 'm', x: 325, y: 935, size: 20, turn: 8 },
];

const WallpaperSvg = styled.svg`
  position: absolute;
  inset: 0;
  z-index: -1;
  width: 100%;
  height: 100%;
`;

const Sheet = ({ x, y, marks = [], small = [], medium = [], large = [], ovals = [], dots = [], paths }) => {
  const rings = [
    ...small.map(([cx, cy]) => [cx, cy, 12, 14]),
    ...medium.map(([cx, cy]) => [cx, cy, 20, 22]),
    ...large.map(([cx, cy]) => [cx, cy, 27, 31]),
    ...ovals,
  ];

  return (
    <g transform={`translate(${x} ${y}) ${SHEET_SCALE}`}>
      {paths.map((d) => (
        <path key={d} d={d} />
      ))}
      {marks.map(([name, mx, my]) => (
        <path key={`${name}${mx}`} d={MARKS[name]} transform={`translate(${mx} ${my})`} />
      ))}
      {rings.map(([cx, cy, rx, ry]) => (
        <ellipse key={`${cx}-${cy}-${rx}`} cx={cx} cy={cy} rx={rx} ry={ry} />
      ))}
      {dots.map(([cx, cy]) => (
        <ellipse key={`${cx}-${cy}`} cx={cx} cy={cy} rx="5" ry="5" fill={LINE} />
      ))}
    </g>
  );
};

const Wallpaper = () => (
  <WallpaperSvg aria-hidden="true">
    <defs>
      <g id="doodles" fill="none" stroke={LINE} strokeWidth="5" strokeLinecap="round" strokeLinejoin="round">
        {SHEETS.map((sheet) => (
          <Sheet key={`${sheet.x}-${sheet.y}`} {...sheet} />
        ))}
      </g>
      <pattern id="tile" width={TILE_WIDTH} height={TILE_HEIGHT} patternUnits="userSpaceOnUse">
        {[-2, -1, 0, 1].map((n) => (
          <use key={n} href="#doodles" x={n * TILE_WIDTH} />
        ))}
        {LETTERS.map(({ label, x, y, size, turn, outline }) => (
          <text
            key={label}
            transform={`translate(${x} ${y}) rotate(${turn})`}
            fontFamily="Noto Sans, Noto Sans CJK SC, sans-serif"
            fontSize={size}
            fill={outline ? 'none' : LINE}
            stroke={outline ? LINE : 'none'}
            strokeWidth="2"
          >
            {label}
          </text>
        ))}
      </pattern>
    </defs>
    <rect width="100%" height="100%" fill="url(#tile)" />
  </WallpaperSvg>
);

// -------------------------------------------------------------------- icons

const Ticks = () => (
  <svg width="24" height="15" viewBox="0 0 24 15" fill="none" stroke="#53bdeb" strokeWidth="2.8" role="img" aria-label="Read">
    <path d="M1 9.5 L5 13.2 L14.5 1.2 M9.5 11.2 L12 13.2 L23 1.2" />
  </svg>
);

const Heart = () => (
  <svg width="32" height="29" viewBox="0 0 32 29" role="img" aria-label="Red heart">
    <defs>
      <linearGradient id="heart" x1="0" y1="0" x2="0" y2="1">
        <stop offset="0" stopColor="#ff8f92" />
        <stop offset="0.25" stopColor="#fb5357" />
        <stop offset="0.7" stopColor="#f73b3e" />
        <stop offset="1" stopColor="#c71f24" />
      </linearGradient>
    </defs>
    <path
      fill="url(#heart)"
      d="M16 5 C14 1.5 11.5 0.3 8.5 0.3 C3.5 0.3 0.3 4 0.3 9 C0.3 17 8 23 16 28.7 C24 23 31.7 17 31.7 9 C31.7 4 28.5 0.3 23.5 0.3 C20.5 0.3 18 1.5 16 5 Z"
    />
    <path fill="#ffd0d1" opacity="0.6" d="M3 5 Q5 1.5 9 1.5 Q12.5 1.8 14 4.5 Q8 2.5 3 5 Z M18 4.5 Q20 1.5 23.5 1.5 Q27.5 1.8 29 5 Q24 2.5 18 4.5 Z" />
  </svg>
);

const Fire = () => (
  <svg width="86" height="108" viewBox="0 0 256 322" role="img" aria-label="Fire">
    <defs>
      <radialGradient id="flame" cx="0.5" cy="0.88" r="0.85">
        <stop offset="0" stopColor="#ffe53a" />
        <stop offset="0.22" stopColor="#ffb514" />
        <stop offset="0.48" stopColor="#ff7a00" />
        <stop offset="0.8" stopColor="#ff4a06" />
        <stop offset="1" stopColor="#fb2a00" />
      </radialGradient>
      <radialGradient id="core" cx="0.5" cy="0.75" r="0.7">
        <stop offset="0" stopColor="#fff68c" />
        <stop offset="0.6" stopColor="#ffe94a" />
        <stop offset="1" stopColor="#ffc529" />
      </radialGradient>
      <linearGradient id="spark" x1="0" y1="0" x2="1" y2="1">
        <stop offset="0" stopColor="#ff7a00" />
        <stop offset="1" stopColor="#ffa51f" />
      </linearGradient>
      <linearGradient id="rim" x1="0" y1="0" x2="0" y2="1">
        <stop offset="0" stopColor="#ff1e00" />
        <stop offset="0.75" stopColor="#ff1e00" />
        <stop offset="1" stopColor="#ff5a00" />
      </linearGradient>
      <filter id="soft" x="-20%" y="-20%" width="140%" height="140%">
        <feGaussianBlur stdDeviation="4" />
      </filter>
      <clipPath id="flameClip">
        <path id="flameShape" d="M120 0 C145 20 163 48 164 80 C165 98 160 117 178 117 C198 116 203 105 198 87 C218 108 220 140 205 165 C198 180 205 191 216 190 C228 188 231 175 228 150 C244 167 256 192 256 220 C255 285 195 322 130 322 C60 322 2 278 0 215 C0 195 7 175 17 160 C16 180 20 190 31 190 C43 187 43 173 35 158 C27 137 34 112 51 97 C51 118 56 132 68 139 C68 100 95 85 112 66 C127 47 130 25 120 0 Z" />
      </clipPath>
    </defs>
    <use href="#flameShape" fill="url(#flame)" />
    <g clipPath="url(#flameClip)">
      <use href="#flameShape" fill="none" stroke="url(#rim)" strokeWidth="22" filter="url(#soft)" />
      <g fill="none" stroke="#ffc42b" strokeLinecap="round" strokeWidth="9" opacity="0.7" filter="url(#soft)">
        <path d="M107 85 C98 120 115 145 135 165 C150 180 158 195 162 212" />
        <path d="M62 150 C65 185 80 215 102 228" />
        <path d="M150 90 C144 120 155 140 173 150" />
        <path d="M230 200 C226 222 214 240 200 250" />
      </g>
      <path
        fill="url(#core)"
        d="M137 205 C151 222 158 243 155 266 C185 278 205 270 222 248 C222 288 180 309 130 309 C80 309 42 278 43 228 C60 262 90 278 115 264 C132 252 138 230 137 205 Z"
      />
    </g>
    <path fill="url(#spark)" d="M81 47 C68 43 56 52 54 67 C54 73 57 79 63 82 C62 67 69 55 81 47 Z" />
    <path fill="url(#spark)" d="M220 94 C235 96 244 106 242 119 C240 125 236 129 230 133 C233 118 230 105 220 94 Z" />
  </svg>
);

// --------------------------------------------------------------------- chat

const Page = styled.main`
  position: relative;
  z-index: 0;
  overflow: hidden;
  min-height: 100vh;
  padding: 6px 25px 8px 37px;
`;

const DateRow = styled.div`
  display: flex;
  justify-content: center;
`;

const DateChip = styled.time`
  padding: 10px 21px 11px;
  border-radius: 8px;
  background: #222;
  color: #cfcfcf;
  font-size: 23px;
  line-height: 32px;
`;

const Messages = styled.ol`
  display: flex;
  flex-direction: column;
  margin: 1px 0 0;
  padding: 0;
  list-style: none;
`;

const sentBubble = css`
  align-self: flex-end;
  padding: 11px 15px 17px 16px;
  border-top-color: #22705f;
  background: #005d4b;
  --meta: #86aea5;
`;

const receivedBubble = css`
  align-self: flex-start;
  margin-left: 11px;
  padding: 10px 11px ${({ $quoted }) => ($quoted ? '8px' : '17px')} 16px;
  border-top-color: #484848;
  background: #353535;
  --meta: #9c9c9c;
`;

const Bubble = styled.li`
  position: relative;
  max-width: 80%;
  margin-top: ${({ $gap }) => $gap}px;
  border-top: 1px solid;
  border-radius: 10px;
  box-shadow: 0 2px 4px rgba(0, 0, 0, 0.2);
  ${({ $sent }) => ($sent ? sentBubble : receivedBubble)}
  ${({ $tail, $sent }) => $tail && ($sent ? 'border-top-right-radius: 0;' : 'border-top-left-radius: 0;')}
`;

const TailSvg = styled.svg`
  position: absolute;
  top: -1px;
  ${({ $sent }) => ($sent ? 'left: 100%;' : 'right: 100%;')}
`;

const Line = styled.div`
  display: flex;
  align-items: flex-end;
  justify-content: space-between;
  gap: ${({ $sent }) => ($sent ? '44px' : '48px')};
`;

const Body = styled.p`
  margin: 0;
  padding-bottom: 4px;
  color: #fff;
  font-size: 26px;
  line-height: 36px;
`;

const Meta = styled.span`
  display: flex;
  align-items: center;
  gap: 12px;
  color: var(--meta);
  font-size: 18px;
  line-height: 24px;
`;

const Quote = styled.blockquote`
  margin: 7px 5px 10px 0;
  padding: 8px 27px 20px 12px;
  border-top: 2px solid #9b9b9b;
  border-left: 8px solid #53bdeb;
  border-radius: 7px;
  background: #4a4a4a;
  color: #d4d4d4;
  font-size: 23px;
  line-height: 29px;
`;

const QuoteAuthor = styled.cite`
  display: block;
  color: #53bdeb;
  font-size: 21px;
  font-style: normal;
  font-weight: 600;
`;

const Sticker = styled.div`
  display: flex;
  justify-content: center;
  width: 235px;
  padding: 6px 0 12px;
`;

const StickerMeta = styled(Meta)`
  justify-content: flex-end;
`;

const StickerBubble = styled(Bubble)`
  padding-bottom: 5px;
`;

const Reaction = styled.button`
  position: absolute;
  top: 56px;
  right: 17px;
  display: flex;
  align-items: center;
  justify-content: center;
  width: 60px;
  height: 52px;
  padding: 0 0 4px;
  border: 1px solid #3a3a3a;
  border-radius: 26px;
  background: #2d2d2d;
`;

const Tail = ({ sent }) => (
  <TailSvg $sent={sent} width="12" height="18" viewBox="0 0 12 18" aria-hidden="true">
    {sent ? (
      <>
        <path d="M0 0 H10 Q12.5 1 11 4 L0 18 Z" fill="#005d4b" />
        <path d="M0 0.5 H10.5" stroke="#22705f" />
      </>
    ) : (
      <>
        <path d="M12 0 H0 L1 3 L12 17 Z" fill="#353535" />
        <path d="M12 0.5 H0" stroke="#484848" />
      </>
    )}
  </TailSvg>
);

const messages = [
  { id: 1, text: 'They finally announced my promotion at work.', time: '10:50', tail: true, gap: 0 },
  { id: 2, text: 'Congratulations', time: '11:17', sent: true, tail: true, gap: 23, reaction: true },
  { id: 3, sticker: true, time: '11:18', sent: true, gap: 44 },
  { id: 4, text: 'So 30% including promotion?', time: '12:20', sent: true, gap: 5 },
  { id: 5, text: 'Yes', time: '20:19', tail: true, gap: 23, quote: { author: 'You', text: 'So 30% including promotion?' } },
  { id: 6, text: 'Okay', time: '20:19', sent: true, tail: true, gap: 23 },
  { id: 7, text: 'Does that match your expectation?', time: '20:19', sent: true, gap: 5 },
  { id: 8, text: 'This is actually i was manifesting', time: '20:20', tail: true, gap: 23 },
];

const Message = ({ text, time, sent, tail, gap, quote, reaction, sticker }) => {
  if (sticker) {
    return (
      <StickerBubble $sent={sent} $gap={gap}>
        <Sticker>
          <Fire />
        </Sticker>
        <StickerMeta>
          <time>{time}</time>
          <Ticks />
        </StickerMeta>
      </StickerBubble>
    );
  }

  return (
    <Bubble $sent={sent} $tail={tail} $gap={gap} $quoted={Boolean(quote)}>
      {tail && <Tail sent={sent} />}
      {quote && (
        <Quote>
          <QuoteAuthor>{quote.author}</QuoteAuthor>
          {quote.text}
        </Quote>
      )}
      <Line $sent={sent}>
        <Body>{text}</Body>
        <Meta>
          <time>{time}</time>
          {sent && <Ticks />}
        </Meta>
      </Line>
      {reaction && (
        <Reaction type="button" aria-label="1 reaction">
          <Heart />
        </Reaction>
      )}
    </Bubble>
  );
};

const App = () => (
  <>
    <GlobalStyle />
    <Page>
      <Wallpaper />
      <DateRow>
        <DateChip dateTime="2025-03-29">29-03-2025</DateChip>
      </DateRow>
      <Messages>
        {messages.map((message) => (
          <Message key={message.id} {...message} />
        ))}
      </Messages>
    </Page>
  </>
);

export default App;
